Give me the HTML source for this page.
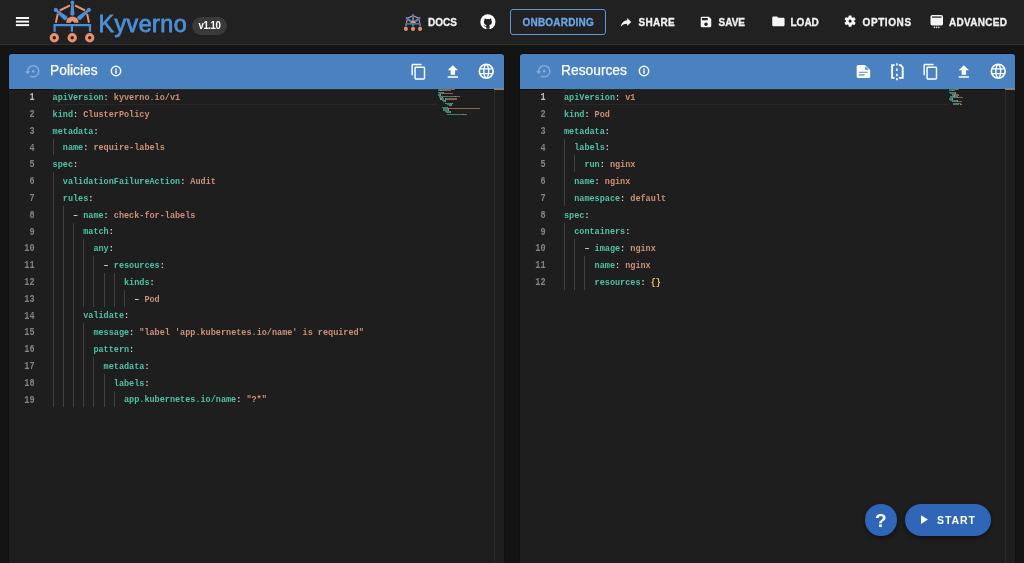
<!DOCTYPE html>
<html><head><meta charset="utf-8">
<style>
html,body{margin:0;padding:0;}
body{width:1024px;height:563px;overflow:hidden;position:relative;background:#141414;font-family:"Liberation Sans",sans-serif;}
.a{position:absolute;}
#bar{position:absolute;left:0;top:0;width:1024px;height:44px;background:#212121;border-bottom:1px solid #2f2f2f;}
.nav{position:absolute;top:17.1px;-webkit-text-stroke:0.3px currentColor;height:12px;line-height:12px;font-size:10px;font-weight:bold;letter-spacing:0px;color:#f2f2f2;white-space:nowrap;}
.ico{position:absolute;fill:#f5f5f5;}
.panel{position:absolute;top:53px;height:520px;background:#1e1e1e;border:1px solid #101010;border-top-color:#060606;border-radius:4px 4px 0 0;overflow:hidden;}
.hdr{position:absolute;left:0;top:0;right:0;height:34.7px;background:#4981c1;}
.ttl{position:absolute;top:62.4px;-webkit-text-stroke:0.25px #fff;height:18px;line-height:18px;font-size:13.8px;color:#fff;white-space:nowrap;}
.hico{position:absolute;fill:#fff;}
.ln{position:absolute;padding-top:1.8px;font-weight:bold;transform:scaleY(1.25);transform-origin:50% 60%;width:40px;text-align:right;height:16.8px;line-height:16.8px;font-family:"Liberation Mono",monospace;font-size:8.5px;color:#858585;}
.ln.act{color:#c6c6c6;}
.cl{position:absolute;padding-top:1.8px;font-weight:bold;height:16.8px;line-height:16.8px;font-family:"Liberation Mono",monospace;font-size:8.5px;white-space:pre;}
.g{position:absolute;width:1px;height:16.8px;background:#404040;}
.mm{position:absolute;height:1.3px;opacity:0.6;}
</style></head><body>
<div id="root" style="position:absolute;left:0;top:0;width:1024px;height:563px;will-change:transform">
<div id="bar"></div>
<!-- hamburger -->
<svg class="a" style="left:0;top:0" width="40" height="40"><g fill="#f5f5f5"><rect x="15.9" y="17" width="13.2" height="2"/><rect x="15.9" y="20.6" width="13.2" height="2"/><rect x="15.9" y="24.1" width="13.2" height="2"/></g></svg>
<!-- logo -->
<svg class="a" style="left:45px;top:0px" width="55" height="44" viewBox="0 0 55 44">
 <g stroke="#ee8f6b" stroke-width="2" fill="none" stroke-linecap="butt">
  <path d="M14.7 10.5 L25 5.4 M29.9 5.4 L40.1 10.5 M12.8 13.7 L10.8 22.8 M42.1 13.7 L44 22.8"/>
 </g>
 <path d="M21.1 22.8 A6.3 6.3 0 0 1 33.7 22.8 Z" fill="#ee8f6b"/>
 <circle cx="27.4" cy="22.8" r="1.5" fill="#111"/>
 <g fill="#4a90d9">
  <g id="pin"><circle cx="27.4" cy="2.5" r="1.9"/><path d="M26.3 3.5 L25.3 14.4 Q27.4 17.2 29.5 14.4 L28.5 3.5 Z"/></g>
  <g transform="translate(-16.6 7.4) rotate(-49.7 27.4 2.5)"><circle cx="27.4" cy="2.5" r="2.1"/><path d="M26.3 3.5 L25.1 15.6 Q27.4 18.4 29.7 15.6 L28.5 3.5 Z"/></g>
  <g transform="translate(16.4 7.4) rotate(49.7 27.4 2.5)"><circle cx="27.4" cy="2.5" r="2.1"/><path d="M26.3 3.5 L25.1 15.6 Q27.4 18.4 29.7 15.6 L28.5 3.5 Z"/></g>
 </g>
 <g stroke="#4a90d9" fill="none">
  <path d="M9.6 31.7 V25.1 H45 V31.7" stroke-width="2.2"/>
  <path d="M26.9 25.1 V31.7" stroke-width="2.2"/>
 </g>
 <g fill="none" stroke="#ee8f6b" stroke-width="3">
  <circle cx="9.3" cy="37.8" r="3.2"/>
  <circle cx="27.2" cy="37.8" r="3.2"/>
  <circle cx="44.7" cy="37.8" r="3.2"/>
 </g>
</svg>
<div class="a" style="left:98.5px;top:8.8px;height:30px;line-height:30px;font-size:23.3px;letter-spacing:0.45px;color:#4a90d9;-webkit-text-stroke:0.8px #4a90d9;">Kyverno</div>
<div class="a" style="left:192px;top:16.5px;width:35px;height:18.5px;border-radius:9px;background:#3a3a3a;color:#fff;font-size:9.6px;letter-spacing:-0.4px;font-weight:bold;line-height:18.5px;text-align:center;"><span style="display:inline-block;transform:scaleY(1.17);transform-origin:50% 62%">v1.10</span></div>

<!-- DOCS -->
<svg class="a" style="left:404px;top:14px" width="17.9" height="16.8" viewBox="4.6 0.6 44.8 41.9">
 <g stroke="#ee8f6b" stroke-width="3" fill="none"><path d="M14.7 10.5 L25 5.4 M29.9 5.4 L40.1 10.5 M12.8 13.7 L10.8 22.8 M42.1 13.7 L44 22.8"/></g>
 <path d="M20.6 22.8 A6.8 6.8 0 0 1 34.2 22.8 Z" fill="#ee8f6b"/>
 <g fill="#4a90d9">
  <circle cx="27.4" cy="2.8" r="2.3"/><path d="M25.8 3.5 L24.8 14.4 Q27.4 17.5 30 14.4 L29 3.5 Z"/>
  <g transform="translate(-16.6 7.4) rotate(-49.7 27.4 2.5)"><circle cx="27.4" cy="2.5" r="2.4"/><path d="M25.8 3.5 L24.6 15.6 Q27.4 18.8 30.2 15.6 L29 3.5 Z"/></g>
  <g transform="translate(16.4 7.4) rotate(49.7 27.4 2.5)"><circle cx="27.4" cy="2.5" r="2.4"/><path d="M25.8 3.5 L24.6 15.6 Q27.4 18.8 30.2 15.6 L29 3.5 Z"/></g>
 </g>
 <g stroke="#4a90d9" fill="none" stroke-width="3.4"><path d="M9.6 32 V25.1 H45 V32 M26.9 25.1 V32"/></g>
 <g fill="none" stroke="#ee8f6b" stroke-width="4.4"><circle cx="9.3" cy="37.8" r="2.9"/><circle cx="27.2" cy="37.8" r="2.9"/><circle cx="44.7" cy="37.8" r="2.9"/></g>
</svg>
<div class="nav" style="left:428px">DOCS</div>
<!-- github -->
<svg class="a" style="left:479.8px;top:13.5px" width="15.8" height="15.8" viewBox="0 0 24 24"><circle cx="12" cy="12" r="11.5" fill="#fff"/><path fill="#212121" d="M9.5 22.5 v-3 c-2 .3-3-.6-3.4-1.6-.4-.9-1-1.2-1.3-1.4 .5-.2 1.2.1 1.6.7 .6.9 1.4 1.3 3 1 .1-.7.4-1.1.8-1.4-2.6-.3-4.3-1.5-4.3-4.6 0-1.1.4-2 1-2.7-.2-.5-.3-1.5.1-2.6 0 0 1-.2 2.7 1 1.5-.4 3.1-.4 4.6 0 1.7-1.2 2.7-1 2.7-1 .4 1.1.3 2.1.1 2.6 .6.7 1 1.6 1 2.7 0 3.1-1.7 4.3-4.3 4.6 .5.4.8 1 .8 2 v3.7z"/></svg>
<!-- onboarding -->
<div class="a" style="left:509.5px;top:9px;width:94px;height:23.5px;border:1.6px solid #5a9ad8;border-radius:3px;"></div>
<div class="nav" style="left:522.5px;color:#6aa6e6;letter-spacing:0.2px">ONBOARDING</div>
<!-- share -->
<svg class="ico" style="left:619px;top:15px" width="14" height="14" viewBox="0 0 24 24"><path d="M14 9V5l7 7-7 7v-4.1c-5 0-8.5 1.6-11 5.1 1-5 4-10 11-11z"/></svg>
<div class="nav" style="left:638.5px;letter-spacing:0.3px">SHARE</div>
<!-- save -->
<svg class="ico" style="left:699px;top:15px" width="14" height="14" viewBox="0 0 24 24"><path d="M17 3H5c-1.11 0-2 .9-2 2v14c0 1.1.89 2 2 2h14c1.1 0 2-.9 2-2V7l-4-4zm-5 16c-1.66 0-3-1.34-3-3s1.34-3 3-3 3 1.34 3 3-1.34 3-3 3zm3-10H5V5h10v4z"/></svg>
<div class="nav" style="left:718.5px">SAVE</div>
<!-- load -->
<svg class="ico" style="left:770.6px;top:14.1px" width="14.8" height="14.8" viewBox="0 0 24 24"><path d="M10 4H4c-1.1 0-1.99.9-1.99 2L2 18c0 1.1.9 2 2 2h16c1.1 0 2-.9 2-2V8c0-1.1-.9-2-2-2h-8l-2-2z"/></svg>
<div class="nav" style="left:790.5px">LOAD</div>
<!-- options -->
<svg class="ico" style="left:843.3px;top:14.3px" width="14.2" height="14.2" viewBox="0 0 24 24"><path d="M19.14 12.94c.04-.3.06-.61.06-.94 0-.32-.02-.64-.07-.94l2.03-1.58c.18-.14.23-.41.12-.61l-1.92-3.32c-.12-.22-.37-.29-.59-.22l-2.39.96c-.5-.38-1.03-.7-1.62-.94l-.36-2.54c-.04-.24-.24-.41-.48-.41h-3.84c-.24 0-.43.17-.47.41l-.36 2.54c-.59.24-1.130.57-1.62.94l-2.39-.96c-.22-.08-.47 0-.59.22L2.74 8.87c-.12.21-.08.47.12.61l2.03 1.58c-.05.3-.09.63-.09.94s.02.64.07.94l-2.03 1.58c-.18.14-.23.41-.12.61l1.92 3.32c.12.22.37.29.59.22l2.39-.96c.5.38 1.03.7 1.62.94l.36 2.54c.05.24.24.41.48.41h3.840c.24 0 .44-.17.47-.41l.36-2.54c.59-.24 1.13-.56 1.62-.94l2.39.96c.22.08.47 0 .59-.22l1.92-3.32c.12-.22.07-.47-.12-.61l-2.01-1.58zM12 14.6a2.6 2.6 0 1 1 0-5.2 2.6 2.6 0 0 1 0 5.2z"/></svg>
<div class="nav" style="left:862.5px;letter-spacing:0.6px">OPTIONS</div>
<!-- advanced -->
<svg class="a" style="left:929px;top:13px" width="16" height="17" viewBox="0 0 16 17"><rect x="1.5" y="1.9" width="12.5" height="10.7" rx="1.8" fill="#f5f5f5"/><rect x="3" y="3.4" width="9.5" height="1.4" fill="#3a3a3a"/><circle cx="5.4" cy="14.4" r="0.8" fill="#ddd"/><circle cx="7.6" cy="14.4" r="0.8" fill="#ddd"/><circle cx="9.8" cy="14.4" r="0.8" fill="#ddd"/></svg>
<div class="nav" style="left:949px;letter-spacing:0.3px">ADVANCED</div>

<!-- LEFT PANEL -->
<div class="panel" style="left:8px;width:494.5px;"><div class="hdr"></div></div>
<div class="a" style="left:9px;top:88.7px;width:494.5px;height:1px;background:#0c0808"></div>
<div class="a" style="left:494px;top:89px;width:1px;height:474px;background:#2a2a2a"></div>
<div class="a" style="left:494px;top:88px;width:10px;height:1.5px;background:#8a8478"></div>
<div class="a" style="left:52.6px;top:89.4px;width:384px;height:15.2px;border:1px solid #282828;border-right:none;box-sizing:border-box;"></div>
<svg class="hico" style="left:24.6px;top:63.2px;opacity:0.35" width="16.5" height="16.5" viewBox="0 0 24 24"><path d="M14 12c0-1.1-.9-2-2-2s-2 .9-2 2 .9 2 2 2 2-.9 2-2zm-2-9c-4.97 0-9 4.03-9 9H0l4 4 4-4H5c0-3.87 3.130-7 7-7s7 3.13 7 7-3.13 7-7 7c-1.51 0-2.91-.49-4.06-1.3l-1.42 1.44C8.04 20.3 9.94 21 12 21c4.97 0 9-4.03 9-9s-4.03-9-9-9z"/></svg>
<div class="ttl" style="left:50px">Policies</div>
<svg class="a" style="left:108.3px;top:63.099999999999994px" width="16" height="16" viewBox="0 0 16 16"><circle cx="8" cy="8" r="4.7" fill="none" stroke="#fff" stroke-width="1.5"/><rect x="7.25" y="5.6" width="1.5" height="1.4" fill="#fff"/><rect x="7.25" y="7.4" width="1.5" height="3.2" fill="#fff"/></svg>
<svg class="hico" style="left:409.75px;top:62.5px" width="17.4" height="17.4" viewBox="0 0 24 24"><path d="M16 1H4c-1.1 0-2 .9-2 2v14h2V3h12V1zm3 4H8c-1.1 0-2 .9-2 2v14c0 1.1.9 2 2 2h11c1.1 0 2-.9 2-2V7c0-1.1-.9-2-2-2zm0 16H8V7h11v14z"/></svg>
<svg class="hico" style="left:444.2px;top:62.8px" width="17.7" height="17.7" viewBox="0 0 24 24"><path d="M5 20h14v-2H5v2zm0-10h4v6h6v-6h4l-7-7-7 7z"/></svg>
<svg class="hico" style="left:477.3px;top:61.8px" width="18.5" height="18.5" viewBox="0 0 24 24"><path d="M12 2a10 10 0 1 0 0 20 10 10 0 0 0 0-20zm0 1.8c.9 1.1 1.6 2.5 2 4.2h-4c.4-1.7 1.1-3.1 2-4.2zM9.6 4.3C9.1 5.4 8.7 6.6 8.4 8H5.3c1-1.7 2.5-3 4.3-3.7zm4.8 0c1.8.7 3.3 2 4.3 3.7h-3.1c-.3-1.4-.7-2.6-1.2-3.7zM4.5 9.8h3.6c-.1.7-.1 1.5-.1 2.2s0 1.5.1 2.2H4.5c-.2-.7-.3-1.4-.3-2.2s.1-1.5.3-2.2zm5.4 0h4.2c.1.7.1 1.5.1 2.2s0 1.5-.1 2.2H9.9c-.1-.7-.1-1.5-.1-2.2s0-1.5.1-2.2zm6 0h3.6c.2.7.3 1.4.3 2.2s-.1 1.5-.3 2.2h-3.6c.1-.7.1-1.5.1-2.2s0-1.5-.1-2.2zM5.3 16h3.1c.3 1.4.7 2.6 1.2 3.7-1.8-.7-3.3-2-4.3-3.7zm4.7 0h4c-.4 1.7-1.1 3.1-2 4.2-.9-1.1-1.6-2.5-2-4.2zm5.6 0h3.1c-1 1.7-2.5 3-4.3 3.7.5-1.1.9-2.3 1.2-3.7z"/></svg>
<div class="ln act" style="top:88.2px;left:-5.5px">1</div>
<div class="cl" style="top:88.2px;left:52.60px"><span style="color:#4fc2a6">apiVersion</span><span style="color:#d4d4d4">: </span><span style="color:#cd9177">kyverno.io/v1</span></div>
<div class="mm" style="left:437.5px;top:88.8px;width:7.0px;background:#4fc2a6"></div>
<div class="mm" style="left:444.5px;top:88.8px;width:1.4px;background:#d4d4d4"></div>
<div class="mm" style="left:445.9px;top:88.8px;width:9.1px;background:#cd9177"></div>
<div class="ln" style="top:105.0px;left:-5.5px">2</div>
<div class="cl" style="top:105.0px;left:52.60px"><span style="color:#4fc2a6">kind</span><span style="color:#d4d4d4">: </span><span style="color:#cd9177">ClusterPolicy</span></div>
<div class="mm" style="left:437.5px;top:90.2px;width:2.8px;background:#4fc2a6"></div>
<div class="mm" style="left:440.3px;top:90.2px;width:1.4px;background:#d4d4d4"></div>
<div class="mm" style="left:441.7px;top:90.2px;width:9.1px;background:#cd9177"></div>
<div class="ln" style="top:121.8px;left:-5.5px">3</div>
<div class="cl" style="top:121.8px;left:52.60px"><span style="color:#4fc2a6">metadata</span><span style="color:#d4d4d4">:</span></div>
<div class="mm" style="left:437.5px;top:91.5px;width:5.6px;background:#4fc2a6"></div>
<div class="mm" style="left:443.1px;top:91.5px;width:0.7px;background:#d4d4d4"></div>
<div class="ln" style="top:138.6px;left:-5.5px">4</div>
<div class="g" style="top:138.6px;left:52.6px"></div>
<div class="cl" style="top:138.6px;left:62.80px"><span style="color:#4fc2a6">name</span><span style="color:#d4d4d4">: </span><span style="color:#cd9177">require-labels</span></div>
<div class="mm" style="left:438.9px;top:92.9px;width:2.8px;background:#4fc2a6"></div>
<div class="mm" style="left:441.7px;top:92.9px;width:1.4px;background:#d4d4d4"></div>
<div class="mm" style="left:443.1px;top:92.9px;width:9.8px;background:#cd9177"></div>
<div class="ln" style="top:155.4px;left:-5.5px">5</div>
<div class="cl" style="top:155.4px;left:52.60px"><span style="color:#4fc2a6">spec</span><span style="color:#d4d4d4">:</span></div>
<div class="mm" style="left:437.5px;top:94.3px;width:2.8px;background:#4fc2a6"></div>
<div class="mm" style="left:440.3px;top:94.3px;width:0.7px;background:#d4d4d4"></div>
<div class="ln" style="top:172.2px;left:-5.5px">6</div>
<div class="g" style="top:172.2px;left:52.6px"></div>
<div class="cl" style="top:172.2px;left:62.80px"><span style="color:#4fc2a6">validationFailureAction</span><span style="color:#d4d4d4">: </span><span style="color:#cd9177">Audit</span></div>
<div class="mm" style="left:438.9px;top:95.6px;width:16.1px;background:#4fc2a6"></div>
<div class="mm" style="left:455.0px;top:95.6px;width:1.4px;background:#d4d4d4"></div>
<div class="mm" style="left:456.4px;top:95.6px;width:3.5px;background:#cd9177"></div>
<div class="ln" style="top:189.0px;left:-5.5px">7</div>
<div class="g" style="top:189.0px;left:52.6px"></div>
<div class="cl" style="top:189.0px;left:62.80px"><span style="color:#4fc2a6">rules</span><span style="color:#d4d4d4">:</span></div>
<div class="mm" style="left:438.9px;top:97.0px;width:3.5px;background:#4fc2a6"></div>
<div class="mm" style="left:442.4px;top:97.0px;width:0.7px;background:#d4d4d4"></div>
<div class="ln" style="top:205.8px;left:-5.5px">8</div>
<div class="g" style="top:205.8px;left:52.6px"></div>
<div class="g" style="top:205.8px;left:62.8px"></div>
<div class="cl" style="top:205.8px;left:73.00px"><span style="color:#d4d4d4">– </span><span style="color:#4fc2a6">name</span><span style="color:#d4d4d4">: </span><span style="color:#cd9177">check-for-labels</span></div>
<div class="mm" style="left:440.3px;top:98.4px;width:1.4px;background:#d4d4d4"></div>
<div class="mm" style="left:441.7px;top:98.4px;width:2.8px;background:#4fc2a6"></div>
<div class="mm" style="left:444.5px;top:98.4px;width:1.4px;background:#d4d4d4"></div>
<div class="mm" style="left:445.9px;top:98.4px;width:11.2px;background:#cd9177"></div>
<div class="ln" style="top:222.6px;left:-5.5px">9</div>
<div class="g" style="top:222.6px;left:52.6px"></div>
<div class="g" style="top:222.6px;left:62.8px"></div>
<div class="g" style="top:222.6px;left:73.0px"></div>
<div class="cl" style="top:222.6px;left:83.20px"><span style="color:#4fc2a6">match</span><span style="color:#d4d4d4">:</span></div>
<div class="mm" style="left:441.7px;top:99.8px;width:3.5px;background:#4fc2a6"></div>
<div class="mm" style="left:445.2px;top:99.8px;width:0.7px;background:#d4d4d4"></div>
<div class="ln" style="top:239.4px;left:-5.5px">10</div>
<div class="g" style="top:239.4px;left:52.6px"></div>
<div class="g" style="top:239.4px;left:62.8px"></div>
<div class="g" style="top:239.4px;left:73.0px"></div>
<div class="g" style="top:239.4px;left:83.2px"></div>
<div class="cl" style="top:239.4px;left:93.40px"><span style="color:#4fc2a6">any</span><span style="color:#d4d4d4">:</span></div>
<div class="mm" style="left:443.1px;top:101.1px;width:2.1px;background:#4fc2a6"></div>
<div class="mm" style="left:445.2px;top:101.1px;width:0.7px;background:#d4d4d4"></div>
<div class="ln" style="top:256.2px;left:-5.5px">11</div>
<div class="g" style="top:256.2px;left:52.6px"></div>
<div class="g" style="top:256.2px;left:62.8px"></div>
<div class="g" style="top:256.2px;left:73.0px"></div>
<div class="g" style="top:256.2px;left:83.2px"></div>
<div class="g" style="top:256.2px;left:93.4px"></div>
<div class="cl" style="top:256.2px;left:103.60px"><span style="color:#d4d4d4">– </span><span style="color:#4fc2a6">resources</span><span style="color:#d4d4d4">:</span></div>
<div class="mm" style="left:444.5px;top:102.5px;width:1.4px;background:#d4d4d4"></div>
<div class="mm" style="left:445.9px;top:102.5px;width:6.3px;background:#4fc2a6"></div>
<div class="mm" style="left:452.2px;top:102.5px;width:0.7px;background:#d4d4d4"></div>
<div class="ln" style="top:273.0px;left:-5.5px">12</div>
<div class="g" style="top:273.0px;left:52.6px"></div>
<div class="g" style="top:273.0px;left:62.8px"></div>
<div class="g" style="top:273.0px;left:73.0px"></div>
<div class="g" style="top:273.0px;left:83.2px"></div>
<div class="g" style="top:273.0px;left:93.4px"></div>
<div class="g" style="top:273.0px;left:103.6px"></div>
<div class="g" style="top:273.0px;left:113.8px"></div>
<div class="cl" style="top:273.0px;left:124.00px"><span style="color:#4fc2a6">kinds</span><span style="color:#d4d4d4">:</span></div>
<div class="mm" style="left:447.3px;top:103.9px;width:3.5px;background:#4fc2a6"></div>
<div class="mm" style="left:450.8px;top:103.9px;width:0.7px;background:#d4d4d4"></div>
<div class="ln" style="top:289.8px;left:-5.5px">13</div>
<div class="g" style="top:289.8px;left:52.6px"></div>
<div class="g" style="top:289.8px;left:62.8px"></div>
<div class="g" style="top:289.8px;left:73.0px"></div>
<div class="g" style="top:289.8px;left:83.2px"></div>
<div class="g" style="top:289.8px;left:93.4px"></div>
<div class="g" style="top:289.8px;left:103.6px"></div>
<div class="g" style="top:289.8px;left:113.8px"></div>
<div class="g" style="top:289.8px;left:124.0px"></div>
<div class="cl" style="top:289.8px;left:134.20px"><span style="color:#d4d4d4">– </span><span style="color:#cd9177">Pod</span></div>
<div class="mm" style="left:448.7px;top:105.2px;width:1.4px;background:#d4d4d4"></div>
<div class="mm" style="left:450.1px;top:105.2px;width:2.1px;background:#cd9177"></div>
<div class="ln" style="top:306.6px;left:-5.5px">14</div>
<div class="g" style="top:306.6px;left:52.6px"></div>
<div class="g" style="top:306.6px;left:62.8px"></div>
<div class="g" style="top:306.6px;left:73.0px"></div>
<div class="cl" style="top:306.6px;left:83.20px"><span style="color:#4fc2a6">validate</span><span style="color:#d4d4d4">:</span></div>
<div class="mm" style="left:441.7px;top:106.6px;width:5.6px;background:#4fc2a6"></div>
<div class="mm" style="left:447.3px;top:106.6px;width:0.7px;background:#d4d4d4"></div>
<div class="ln" style="top:323.4px;left:-5.5px">15</div>
<div class="g" style="top:323.4px;left:52.6px"></div>
<div class="g" style="top:323.4px;left:62.8px"></div>
<div class="g" style="top:323.4px;left:73.0px"></div>
<div class="g" style="top:323.4px;left:83.2px"></div>
<div class="cl" style="top:323.4px;left:93.40px"><span style="color:#4fc2a6">message</span><span style="color:#d4d4d4">: </span><span style="color:#cd9177">&quot;label &#x27;app.kubernetes.io/name&#x27; is required&quot;</span></div>
<div class="mm" style="left:443.1px;top:108.0px;width:4.9px;background:#4fc2a6"></div>
<div class="mm" style="left:448.0px;top:108.0px;width:1.4px;background:#d4d4d4"></div>
<div class="mm" style="left:449.4px;top:108.0px;width:30.8px;background:#cd9177"></div>
<div class="ln" style="top:340.2px;left:-5.5px">16</div>
<div class="g" style="top:340.2px;left:52.6px"></div>
<div class="g" style="top:340.2px;left:62.8px"></div>
<div class="g" style="top:340.2px;left:73.0px"></div>
<div class="g" style="top:340.2px;left:83.2px"></div>
<div class="cl" style="top:340.2px;left:93.40px"><span style="color:#4fc2a6">pattern</span><span style="color:#d4d4d4">:</span></div>
<div class="mm" style="left:443.1px;top:109.3px;width:4.9px;background:#4fc2a6"></div>
<div class="mm" style="left:448.0px;top:109.3px;width:0.7px;background:#d4d4d4"></div>
<div class="ln" style="top:357.0px;left:-5.5px">17</div>
<div class="g" style="top:357.0px;left:52.6px"></div>
<div class="g" style="top:357.0px;left:62.8px"></div>
<div class="g" style="top:357.0px;left:73.0px"></div>
<div class="g" style="top:357.0px;left:83.2px"></div>
<div class="g" style="top:357.0px;left:93.4px"></div>
<div class="cl" style="top:357.0px;left:103.60px"><span style="color:#4fc2a6">metadata</span><span style="color:#d4d4d4">:</span></div>
<div class="mm" style="left:444.5px;top:110.7px;width:5.6px;background:#4fc2a6"></div>
<div class="mm" style="left:450.1px;top:110.7px;width:0.7px;background:#d4d4d4"></div>
<div class="ln" style="top:373.8px;left:-5.5px">18</div>
<div class="g" style="top:373.8px;left:52.6px"></div>
<div class="g" style="top:373.8px;left:62.8px"></div>
<div class="g" style="top:373.8px;left:73.0px"></div>
<div class="g" style="top:373.8px;left:83.2px"></div>
<div class="g" style="top:373.8px;left:93.4px"></div>
<div class="g" style="top:373.8px;left:103.6px"></div>
<div class="cl" style="top:373.8px;left:113.80px"><span style="color:#4fc2a6">labels</span><span style="color:#d4d4d4">:</span></div>
<div class="mm" style="left:445.9px;top:112.1px;width:4.2px;background:#4fc2a6"></div>
<div class="mm" style="left:450.1px;top:112.1px;width:0.7px;background:#d4d4d4"></div>
<div class="ln" style="top:390.6px;left:-5.5px">19</div>
<div class="g" style="top:390.6px;left:52.6px"></div>
<div class="g" style="top:390.6px;left:62.8px"></div>
<div class="g" style="top:390.6px;left:73.0px"></div>
<div class="g" style="top:390.6px;left:83.2px"></div>
<div class="g" style="top:390.6px;left:93.4px"></div>
<div class="g" style="top:390.6px;left:103.6px"></div>
<div class="g" style="top:390.6px;left:113.8px"></div>
<div class="cl" style="top:390.6px;left:124.00px"><span style="color:#4fc2a6">app.kubernetes.io/name</span><span style="color:#d4d4d4">: </span><span style="color:#cd9177">&quot;?*&quot;</span></div>
<div class="mm" style="left:447.3px;top:113.5px;width:15.4px;background:#4fc2a6"></div>
<div class="mm" style="left:462.7px;top:113.5px;width:1.4px;background:#d4d4d4"></div>
<div class="mm" style="left:464.1px;top:113.5px;width:2.8px;background:#cd9177"></div>

<!-- RIGHT PANEL -->
<div class="panel" style="left:519px;width:494.5px;"><div class="hdr"></div></div>
<div class="a" style="left:520px;top:88.7px;width:494.5px;height:1px;background:#0c0808"></div>
<div class="a" style="left:1005px;top:89px;width:1px;height:474px;background:#2a2a2a"></div>
<div class="a" style="left:1005px;top:88px;width:10px;height:1.5px;background:#8a8478"></div>
<div class="a" style="left:563.6px;top:89.4px;width:384px;height:15.2px;border:1px solid #282828;border-right:none;box-sizing:border-box;"></div>
<svg class="hico" style="left:536px;top:63.2px;opacity:0.35" width="16.5" height="16.5" viewBox="0 0 24 24"><path d="M14 12c0-1.1-.9-2-2-2s-2 .9-2 2 .9 2 2 2 2-.9 2-2zm-2-9c-4.97 0-9 4.03-9 9H0l4 4 4-4H5c0-3.87 3.130-7 7-7s7 3.13 7 7-3.13 7-7 7c-1.51 0-2.91-.49-4.06-1.3l-1.42 1.44C8.04 20.3 9.94 21 12 21c4.97 0 9-4.03 9-9s-4.03-9-9-9z"/></svg>
<div class="ttl" style="left:561px">Resources</div>
<svg class="a" style="left:636.3px;top:63.099999999999994px" width="16" height="16" viewBox="0 0 16 16"><circle cx="8" cy="8" r="4.7" fill="none" stroke="#fff" stroke-width="1.5"/><rect x="7.25" y="5.6" width="1.5" height="1.4" fill="#fff"/><rect x="7.25" y="7.4" width="1.5" height="3.2" fill="#fff"/></svg>
<svg class="a" style="left:855px;top:63px" width="17" height="17" viewBox="0 0 17 17"><path d="M3.2 2 H10 L15.2 7 V13.4 Q15.2 14.9 13.7 14.9 H3.2 Q1.7 14.9 1.7 13.4 V3.5 Q1.7 2 3.2 2 Z" fill="#fff"/><path d="M10.3 3.2 V6.7 H13.8 Z" fill="#4981c1"/><rect x="3.8" y="8.8" width="8.8" height="0.9" fill="#4981c1"/><rect x="3.8" y="11.4" width="5.8" height="1.2" fill="#4981c1"/></svg>
<svg class="a" style="left:888px;top:62px" width="18" height="19" viewBox="0 0 18 19"><path d="M6.6 3.1 H4.1 V15.9 H6.6" fill="none" stroke="#fff" stroke-width="1.9"/><path d="M10.9 3.1 H12.6 L14.7 5.3 V15.9 H10.9" fill="none" stroke="#fff" stroke-width="1.9"/><path d="M8.9 1.3 V3.6 M8.9 6.5 V8.9 M8.9 11.8 V14.2 M8.9 16 V18.3" stroke="#fff" stroke-width="1.6"/></svg>
<svg class="hico" style="left:921.7px;top:62.5px" width="17.4" height="17.4" viewBox="0 0 24 24"><path d="M16 1H4c-1.1 0-2 .9-2 2v14h2V3h12V1zm3 4H8c-1.1 0-2 .9-2 2v14c0 1.1.9 2 2 2h11c1.1 0 2-.9 2-2V7c0-1.1-.9-2-2-2zm0 16H8V7h11v14z"/></svg>
<svg class="hico" style="left:955.4px;top:62.8px" width="17.7" height="17.7" viewBox="0 0 24 24"><path d="M5 20h14v-2H5v2zm0-10h4v6h6v-6h4l-7-7-7 7z"/></svg>
<svg class="hico" style="left:988.8px;top:61.8px" width="18.5" height="18.5" viewBox="0 0 24 24"><path d="M12 2a10 10 0 1 0 0 20 10 10 0 0 0 0-20zm0 1.8c.9 1.1 1.6 2.5 2 4.2h-4c.4-1.7 1.1-3.1 2-4.2zM9.6 4.3C9.1 5.4 8.7 6.6 8.4 8H5.3c1-1.7 2.5-3 4.3-3.7zm4.8 0c1.8.7 3.3 2 4.3 3.7h-3.1c-.3-1.4-.7-2.6-1.2-3.7zM4.5 9.8h3.6c-.1.7-.1 1.5-.1 2.2s0 1.5.1 2.2H4.5c-.2-.7-.3-1.4-.3-2.2s.1-1.5.3-2.2zm5.4 0h4.2c.1.7.1 1.5.1 2.2s0 1.5-.1 2.2H9.9c-.1-.7-.1-1.5-.1-2.2s0-1.5.1-2.2zm6 0h3.6c.2.7.3 1.4.3 2.2s-.1 1.5-.3 2.2h-3.6c.1-.7.1-1.5.1-2.2s0-1.5-.1-2.2zM5.3 16h3.1c.3 1.4.7 2.6 1.2 3.7-1.8-.7-3.3-2-4.3-3.7zm4.7 0h4c-.4 1.7-1.1 3.1-2 4.2-.9-1.1-1.6-2.5-2-4.2zm5.6 0h3.1c-1 1.7-2.5 3-4.3 3.7.5-1.1.9-2.3 1.2-3.7z"/></svg>
<div class="ln act" style="top:88.2px;left:505.5px">1</div>
<div class="cl" style="top:88.2px;left:564.00px"><span style="color:#4fc2a6">apiVersion</span><span style="color:#d4d4d4">: </span><span style="color:#cd9177">v1</span></div>
<div class="mm" style="left:949.0px;top:88.8px;width:7.0px;background:#4fc2a6"></div>
<div class="mm" style="left:956.0px;top:88.8px;width:1.4px;background:#d4d4d4"></div>
<div class="mm" style="left:957.4px;top:88.8px;width:1.4px;background:#cd9177"></div>
<div class="ln" style="top:105.0px;left:505.5px">2</div>
<div class="cl" style="top:105.0px;left:564.00px"><span style="color:#4fc2a6">kind</span><span style="color:#d4d4d4">: </span><span style="color:#cd9177">Pod</span></div>
<div class="mm" style="left:949.0px;top:90.2px;width:2.8px;background:#4fc2a6"></div>
<div class="mm" style="left:951.8px;top:90.2px;width:1.4px;background:#d4d4d4"></div>
<div class="mm" style="left:953.2px;top:90.2px;width:2.1px;background:#cd9177"></div>
<div class="ln" style="top:121.8px;left:505.5px">3</div>
<div class="cl" style="top:121.8px;left:564.00px"><span style="color:#4fc2a6">metadata</span><span style="color:#d4d4d4">:</span></div>
<div class="mm" style="left:949.0px;top:91.5px;width:5.6px;background:#4fc2a6"></div>
<div class="mm" style="left:954.6px;top:91.5px;width:0.7px;background:#d4d4d4"></div>
<div class="ln" style="top:138.6px;left:505.5px">4</div>
<div class="g" style="top:138.6px;left:564.0px"></div>
<div class="cl" style="top:138.6px;left:574.20px"><span style="color:#4fc2a6">labels</span><span style="color:#d4d4d4">:</span></div>
<div class="mm" style="left:950.4px;top:92.9px;width:4.2px;background:#4fc2a6"></div>
<div class="mm" style="left:954.6px;top:92.9px;width:0.7px;background:#d4d4d4"></div>
<div class="ln" style="top:155.4px;left:505.5px">5</div>
<div class="g" style="top:155.4px;left:564.0px"></div>
<div class="g" style="top:155.4px;left:574.2px"></div>
<div class="cl" style="top:155.4px;left:584.40px"><span style="color:#4fc2a6">run</span><span style="color:#d4d4d4">: </span><span style="color:#cd9177">nginx</span></div>
<div class="mm" style="left:951.8px;top:94.3px;width:2.1px;background:#4fc2a6"></div>
<div class="mm" style="left:953.9px;top:94.3px;width:1.4px;background:#d4d4d4"></div>
<div class="mm" style="left:955.3px;top:94.3px;width:3.5px;background:#cd9177"></div>
<div class="ln" style="top:172.2px;left:505.5px">6</div>
<div class="g" style="top:172.2px;left:564.0px"></div>
<div class="cl" style="top:172.2px;left:574.20px"><span style="color:#4fc2a6">name</span><span style="color:#d4d4d4">: </span><span style="color:#cd9177">nginx</span></div>
<div class="mm" style="left:950.4px;top:95.6px;width:2.8px;background:#4fc2a6"></div>
<div class="mm" style="left:953.2px;top:95.6px;width:1.4px;background:#d4d4d4"></div>
<div class="mm" style="left:954.6px;top:95.6px;width:3.5px;background:#cd9177"></div>
<div class="ln" style="top:189.0px;left:505.5px">7</div>
<div class="g" style="top:189.0px;left:564.0px"></div>
<div class="cl" style="top:189.0px;left:574.20px"><span style="color:#4fc2a6">namespace</span><span style="color:#d4d4d4">: </span><span style="color:#cd9177">default</span></div>
<div class="mm" style="left:950.4px;top:97.0px;width:6.3px;background:#4fc2a6"></div>
<div class="mm" style="left:956.7px;top:97.0px;width:1.4px;background:#d4d4d4"></div>
<div class="mm" style="left:958.1px;top:97.0px;width:4.9px;background:#cd9177"></div>
<div class="ln" style="top:205.8px;left:505.5px">8</div>
<div class="cl" style="top:205.8px;left:564.00px"><span style="color:#4fc2a6">spec</span><span style="color:#d4d4d4">:</span></div>
<div class="mm" style="left:949.0px;top:98.4px;width:2.8px;background:#4fc2a6"></div>
<div class="mm" style="left:951.8px;top:98.4px;width:0.7px;background:#d4d4d4"></div>
<div class="ln" style="top:222.6px;left:505.5px">9</div>
<div class="g" style="top:222.6px;left:564.0px"></div>
<div class="cl" style="top:222.6px;left:574.20px"><span style="color:#4fc2a6">containers</span><span style="color:#d4d4d4">:</span></div>
<div class="mm" style="left:950.4px;top:99.8px;width:7.0px;background:#4fc2a6"></div>
<div class="mm" style="left:957.4px;top:99.8px;width:0.7px;background:#d4d4d4"></div>
<div class="ln" style="top:239.4px;left:505.5px">10</div>
<div class="g" style="top:239.4px;left:564.0px"></div>
<div class="g" style="top:239.4px;left:574.2px"></div>
<div class="cl" style="top:239.4px;left:584.40px"><span style="color:#d4d4d4">– </span><span style="color:#4fc2a6">image</span><span style="color:#d4d4d4">: </span><span style="color:#cd9177">nginx</span></div>
<div class="mm" style="left:951.8px;top:101.1px;width:1.4px;background:#d4d4d4"></div>
<div class="mm" style="left:953.2px;top:101.1px;width:3.5px;background:#4fc2a6"></div>
<div class="mm" style="left:956.7px;top:101.1px;width:1.4px;background:#d4d4d4"></div>
<div class="mm" style="left:958.1px;top:101.1px;width:3.5px;background:#cd9177"></div>
<div class="ln" style="top:256.2px;left:505.5px">11</div>
<div class="g" style="top:256.2px;left:564.0px"></div>
<div class="g" style="top:256.2px;left:574.2px"></div>
<div class="g" style="top:256.2px;left:584.4px"></div>
<div class="cl" style="top:256.2px;left:594.60px"><span style="color:#4fc2a6">name</span><span style="color:#d4d4d4">: </span><span style="color:#cd9177">nginx</span></div>
<div class="mm" style="left:953.2px;top:102.5px;width:2.8px;background:#4fc2a6"></div>
<div class="mm" style="left:956.0px;top:102.5px;width:1.4px;background:#d4d4d4"></div>
<div class="mm" style="left:957.4px;top:102.5px;width:3.5px;background:#cd9177"></div>
<div class="ln" style="top:273.0px;left:505.5px">12</div>
<div class="g" style="top:273.0px;left:564.0px"></div>
<div class="g" style="top:273.0px;left:574.2px"></div>
<div class="g" style="top:273.0px;left:584.4px"></div>
<div class="cl" style="top:273.0px;left:594.60px"><span style="color:#4fc2a6">resources</span><span style="color:#d4d4d4">: </span><span style="color:#e6c35c">{}</span></div>
<div class="mm" style="left:953.2px;top:103.9px;width:6.3px;background:#4fc2a6"></div>
<div class="mm" style="left:959.5px;top:103.9px;width:1.4px;background:#d4d4d4"></div>
<div class="mm" style="left:960.9px;top:103.9px;width:1.4px;background:#e6c35c"></div>

<!-- FABs -->
<div class="a" style="left:865px;top:504px;width:31.5px;height:31.5px;border-radius:50%;background:#2f66b8;box-shadow:0 2px 4px rgba(0,0,0,0.5);color:#fff;font-weight:bold;font-size:19px;line-height:33px;text-align:center;">?</div>
<div class="a" style="left:905px;top:504px;width:86px;height:31.5px;border-radius:16px;background:#2f66b8;box-shadow:0 2px 4px rgba(0,0,0,0.5);"></div>
<svg class="a" style="left:915.5px;top:511.5px" width="15" height="15" viewBox="0 0 24 24"><path d="M8 5v14l11-7z" fill="#fff"/></svg>
<div class="a" style="left:937px;top:514px;height:12px;line-height:12px;font-size:10.5px;font-weight:bold;letter-spacing:0.9px;color:#fff;">START</div>
</div>
</body></html>
